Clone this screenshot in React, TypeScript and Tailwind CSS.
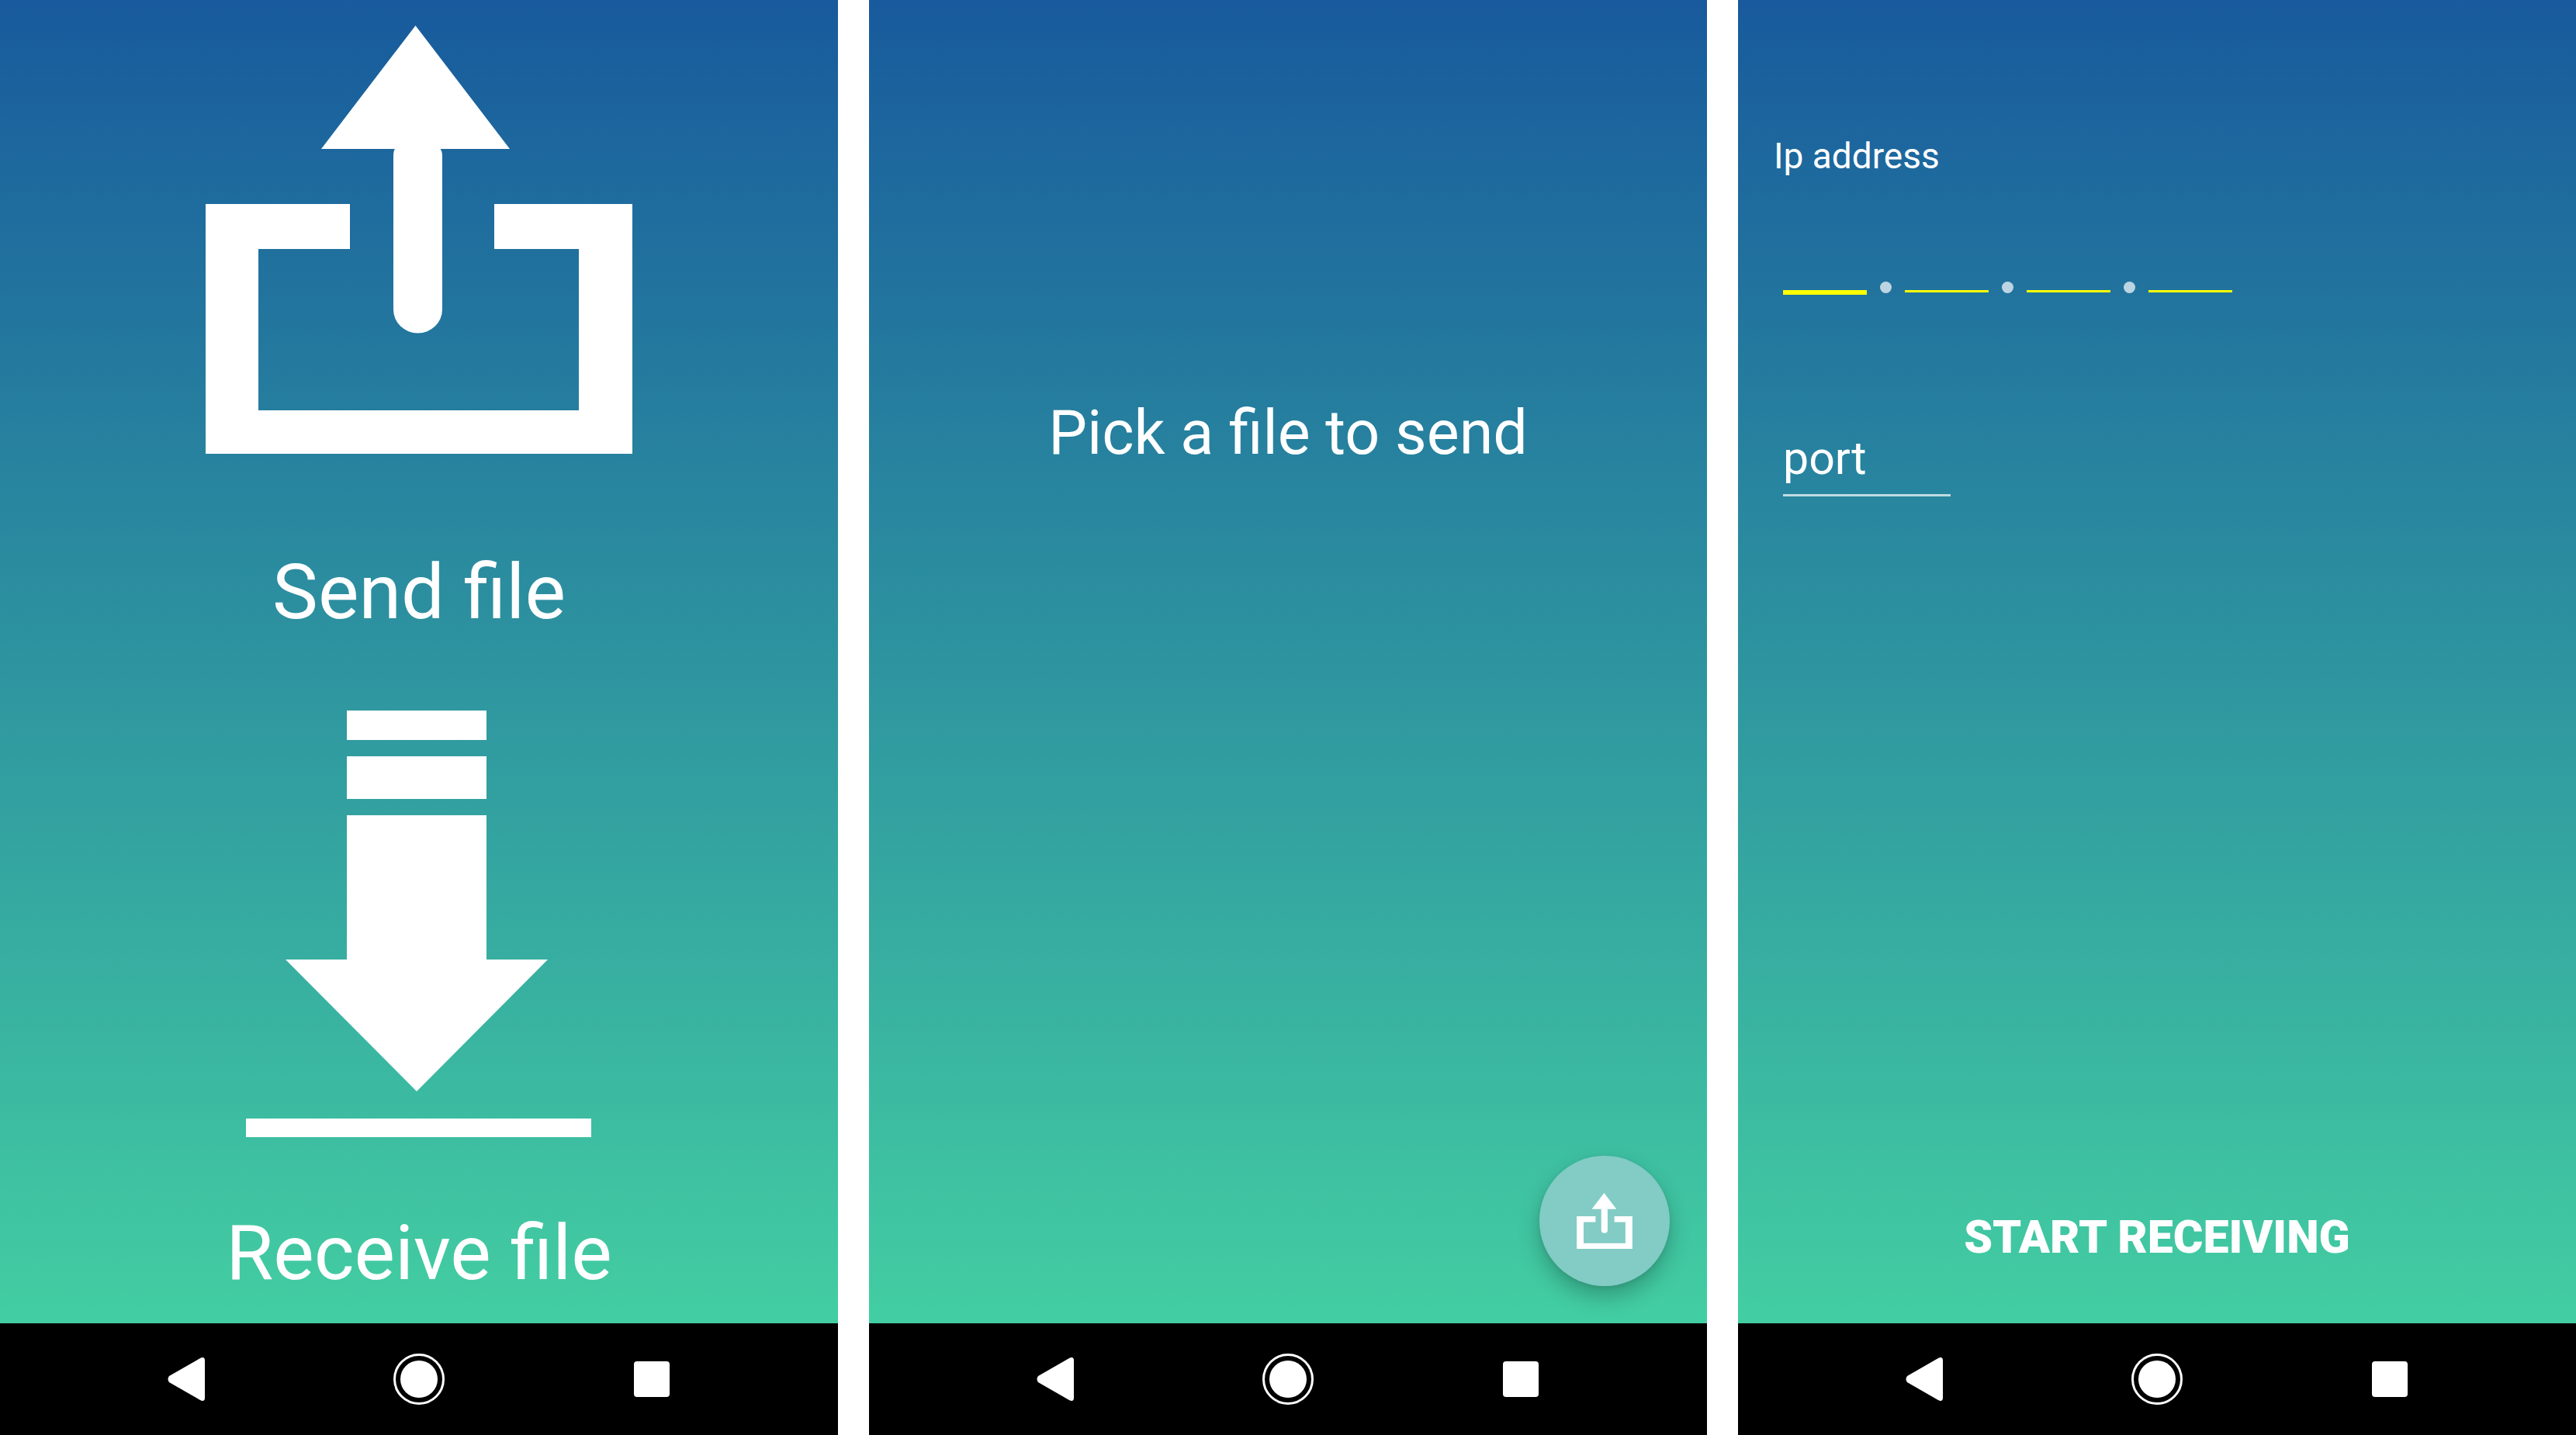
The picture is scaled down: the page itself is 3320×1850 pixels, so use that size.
import type { ReactNode } from "react";

function ShareIcon({ className }: { className: string }) {
  return (
    <svg viewBox="0 0 550 552" className={className} fill="currentColor" aria-hidden="true">
      <path d="M270.5 0 392 159H149Z" />
      <path d="M242 168Q242 161 245 157H301Q305 161 305 168V366A31.500 30.500 0 0 1 242 366Z" />
      <path d="M0 230H186V288H68V496H481V288H372V230H550V552H0Z" />
    </svg>
  );
}

function DownloadIcon({ className }: { className: string }) {
  return (
    <svg viewBox="0 0 446 550" className={className} fill="currentColor" aria-hidden="true">
      <path d="M130 0H310V38H130Z" />
      <path d="M130 59H310V114H130Z" />
      <path d="M130 135H310V321H389L220 491 51 321H130Z" />
      <path d="M0 526H445V550H0Z" />
    </svg>
  );
}

function NavigationBar() {
  return (
    <nav aria-label="System" className="flex h-36 items-center justify-center bg-black text-white">
      <button aria-label="Back" className="flex w-[300px] justify-center">
        <svg viewBox="0 0 48 56" className="h-14 w-12" fill="currentColor">
          <path d="M42 1Q44 0 45 0 48 0 48 4V52Q48 56 45 56 44 56 42 55L2 32Q-1 28 2 24Z" />
        </svg>
      </button>
      <button aria-label="Home" className="flex w-[300px] justify-center">
        <svg viewBox="0 0 66 66" className="size-[66px]">
          <circle cx="33" cy="33" r="31.500" fill="none" stroke="currentColor" strokeWidth="3" />
          <circle cx="33" cy="33" r="24" fill="currentColor" />
        </svg>
      </button>
      <button aria-label="Recent apps" className="flex w-[300px] justify-center">
        <svg viewBox="0 0 46 46" className="size-[46px]" fill="currentColor">
          <rect width="46" height="46" rx="4" />
        </svg>
      </button>
    </nav>
  );
}

function Screen({ children }: { children: ReactNode }) {
  return (
    <section className="flex min-h-screen flex-col">
      <div className="relative flex grow flex-col bg-linear-to-b/srgb from-[#185a9d] to-[#43cea2] text-white">
        {children}
      </div>
      <NavigationBar />
    </section>
  );
}

function HomeScreen() {
  return (
    <Screen>
      <button className="flex flex-col items-center pt-[33px]">
        <ShareIcon className="h-[552px] w-[550px]" />
        <span className="mt-[118px] text-[99px] leading-[120px]">Send file</span>
      </button>
      <button className="mt-[93px] flex flex-col items-center">
        <DownloadIcon className="h-[550px] w-[446px]" />
        <span className="mt-[89px] text-[99px] leading-[120px]">Receive file</span>
      </button>
    </Screen>
  );
}

function SendScreen() {
  return (
    <Screen>
      <h1 className="pt-[510px] text-center text-[79px] leading-[96px]">Pick a file to send</h1>
      <button
        aria-label="Pick a file"
        className="absolute right-12 bottom-12 flex size-[168px] items-center justify-center rounded-full bg-[#82ccc5] shadow-[0_14px_28px_rgba(0,0,0,0.24),0_2px_6px_rgba(0,0,0,0.08)]"
      >
        <ShareIcon className="size-[72px]" />
      </button>
    </Screen>
  );
}

function Dot() {
  return <span aria-hidden="true" className="mb-0.5 size-[15px] rounded-full bg-white/70" />;
}

function Octet({ label, active = false }: { label: string; active?: boolean }) {
  return (
    <input
      aria-label={label}
      inputMode="numeric"
      className={
        active
          ? "h-24 w-[108px] border-b-6 border-[#ffff00] bg-transparent text-center text-5xl outline-none"
          : "mb-[3px] h-[93px] w-[108px] border-b-3 border-[#ffff00] bg-transparent text-center text-5xl outline-none"
      }
    />
  );
}

function ReceiveScreen() {
  return (
    <Screen>
      <fieldset>
        <legend className="pt-[172px] pl-[46px] text-[46px] leading-[58px]">Ip address</legend>
        <div className="flex items-end gap-[17px] pt-[54px] pl-[58px]">
          <Octet label="First octet" active />
          <Dot />
          <Octet label="Second octet" />
          <Dot />
          <Octet label="Third octet" />
          <Dot />
          <Octet label="Fourth octet" />
        </div>
      </fieldset>
      <input
        aria-label="port"
        placeholder="port"
        className="mt-[168px] ml-[58px] h-[92px] w-[216px] border-b-3 border-white/70 bg-transparent pb-1 text-[59px] leading-[72px] outline-none placeholder:text-white"
      />
      <button className="mx-auto mt-auto mb-[75px] text-[59px] leading-[72px] font-black">
        START RECEIVING
      </button>
    </Screen>
  );
}

export default function App() {
  return (
    <main className="grid grid-cols-3 gap-10 bg-white font-[Roboto,sans-serif]">
      <HomeScreen />
      <SendScreen />
      <ReceiveScreen />
    </main>
  );
}
